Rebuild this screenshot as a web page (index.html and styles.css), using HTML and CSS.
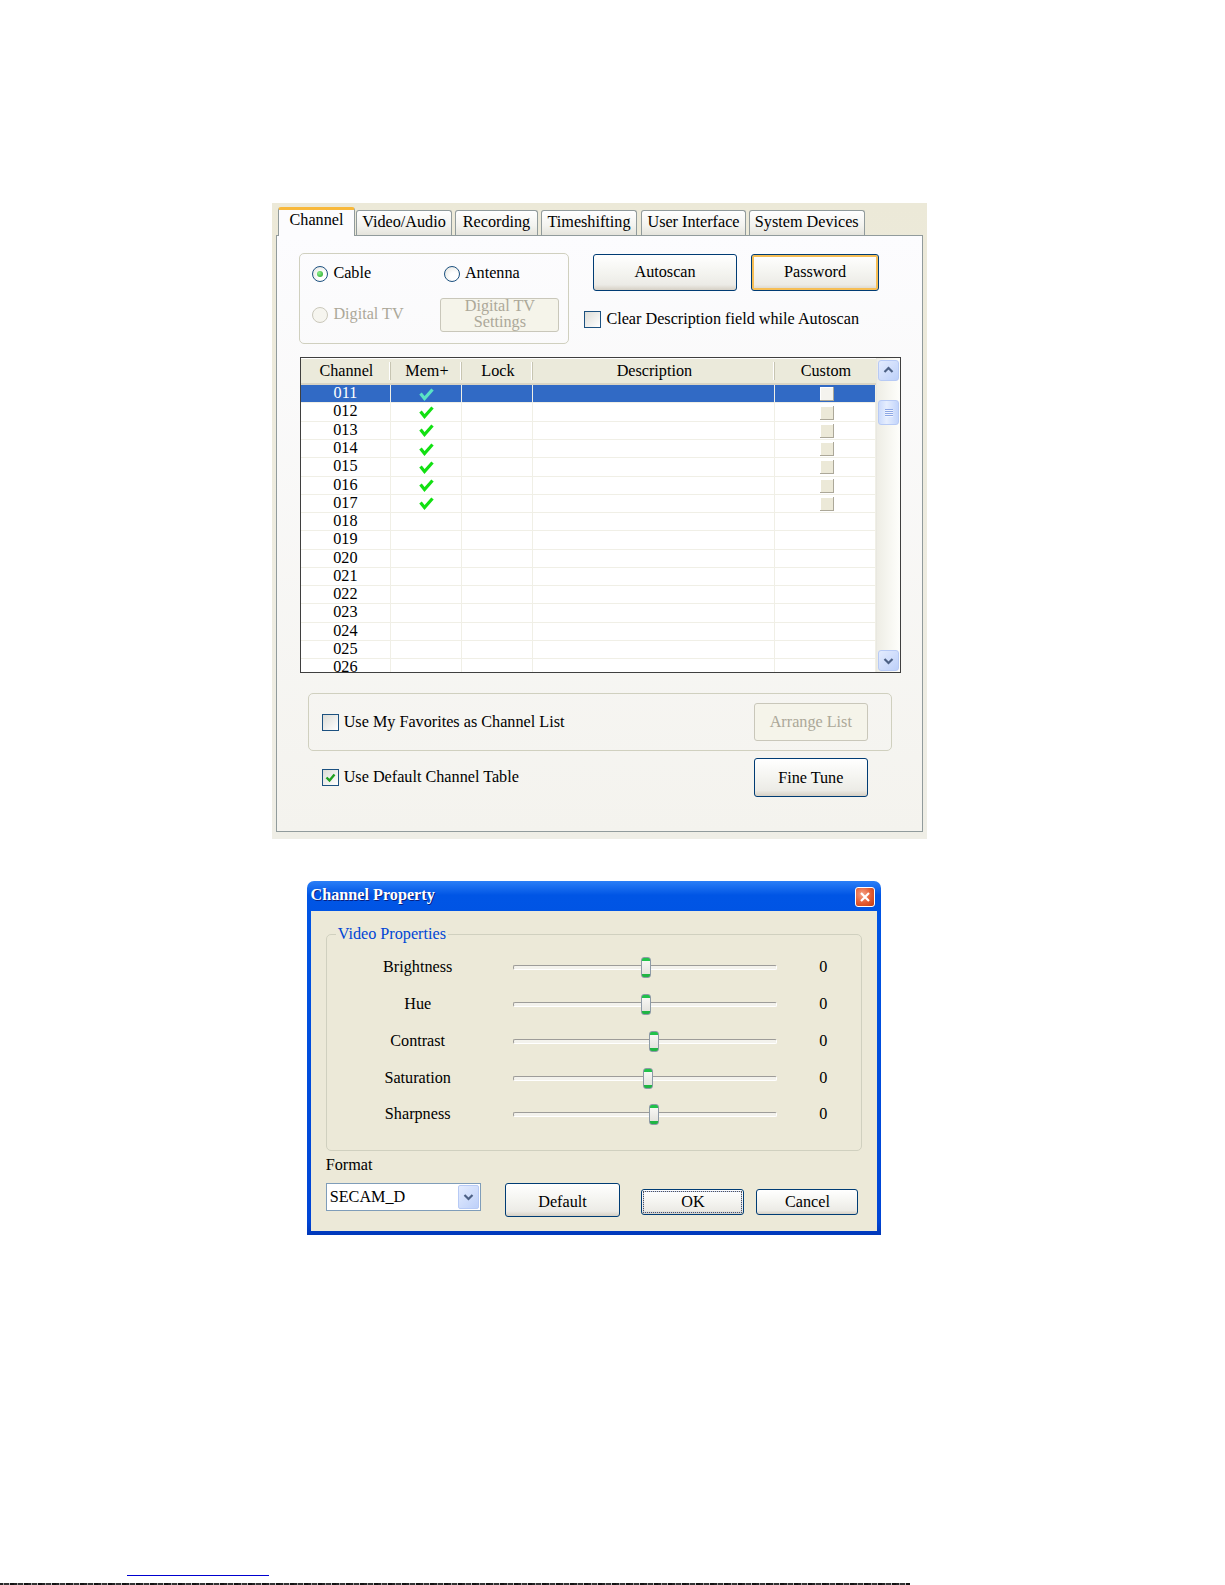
FILE: index.html
```html
<!DOCTYPE html>
<html lang="en">
<head>
    <meta charset="UTF-8">
    <meta name="viewport" content="width=device-width, initial-scale=1.0">
    <title>Channel Settings</title>
    <link rel="stylesheet" href="styles.css">
</head>
<body>

<div class="settings">
    <div class="tabs">
        <div class="tab active tab-channel">Channel</div>
        <div class="tab tab-video">Video/Audio</div>
        <div class="tab tab-rec">Recording</div>
        <div class="tab tab-time">Timeshifting</div>
        <div class="tab tab-ui">User Interface</div>
        <div class="tab tab-sys">System Devices</div>
    </div>

    <div class="panel">
        <div class="top-row">
            <div class="group source-group">
                <label class="radio"><span class="radio-dot checked"></span>Cable</label>
                <label class="radio antenna"><span class="radio-dot"></span>Antenna</label>
                <label class="radio disabled"><span class="radio-dot"></span>Digital TV</label>
                <button class="btn disabled dtv-btn">Digital TV<br>Settings</button>
            </div>
            <div class="scan-col">
                <div class="scan-buttons">
                    <button class="btn autoscan-btn">Autoscan</button>
                    <button class="btn default-btn password-btn">Password</button>
                </div>
                <label class="check"><span class="check-box"></span>Clear Description field while Autoscan</label>
            </div>
        </div>

        <div class="listview">
            <div class="lv-main">
                <div class="lv-head">
                    <span>Channel</span>
                    <span>Mem+</span>
                    <span>Lock</span>
                    <span>Description</span>
                    <span>Custom</span>
                </div>
                <div class="lv-body">
                    <div class="lv-row selected"><span>011</span><span><svg class="tick" width="15" height="13" viewBox="0 0 15 13"><path d="M1.5 5.5 L5.5 10.5 L13.5 1.5"/></svg></span><span></span><span></span><span><i class="flat-box"></i></span></div>
                    <div class="lv-row"><span>012</span><span><svg class="tick" width="15" height="13" viewBox="0 0 15 13"><path d="M1.5 5.5 L5.5 10.5 L13.5 1.5"/></svg></span><span></span><span></span><span><i class="flat-box"></i></span></div>
                    <div class="lv-row"><span>013</span><span><svg class="tick" width="15" height="13" viewBox="0 0 15 13"><path d="M1.5 5.5 L5.5 10.5 L13.5 1.5"/></svg></span><span></span><span></span><span><i class="flat-box"></i></span></div>
                    <div class="lv-row"><span>014</span><span><svg class="tick" width="15" height="13" viewBox="0 0 15 13"><path d="M1.5 5.5 L5.5 10.5 L13.5 1.5"/></svg></span><span></span><span></span><span><i class="flat-box"></i></span></div>
                    <div class="lv-row"><span>015</span><span><svg class="tick" width="15" height="13" viewBox="0 0 15 13"><path d="M1.5 5.5 L5.5 10.5 L13.5 1.5"/></svg></span><span></span><span></span><span><i class="flat-box"></i></span></div>
                    <div class="lv-row"><span>016</span><span><svg class="tick" width="15" height="13" viewBox="0 0 15 13"><path d="M1.5 5.5 L5.5 10.5 L13.5 1.5"/></svg></span><span></span><span></span><span><i class="flat-box"></i></span></div>
                    <div class="lv-row"><span>017</span><span><svg class="tick" width="15" height="13" viewBox="0 0 15 13"><path d="M1.5 5.5 L5.5 10.5 L13.5 1.5"/></svg></span><span></span><span></span><span><i class="flat-box"></i></span></div>
                    <div class="lv-row"><span>018</span><span></span><span></span><span></span><span></span></div>
                    <div class="lv-row"><span>019</span><span></span><span></span><span></span><span></span></div>
                    <div class="lv-row"><span>020</span><span></span><span></span><span></span><span></span></div>
                    <div class="lv-row"><span>021</span><span></span><span></span><span></span><span></span></div>
                    <div class="lv-row"><span>022</span><span></span><span></span><span></span><span></span></div>
                    <div class="lv-row"><span>023</span><span></span><span></span><span></span><span></span></div>
                    <div class="lv-row"><span>024</span><span></span><span></span><span></span><span></span></div>
                    <div class="lv-row"><span>025</span><span></span><span></span><span></span><span></span></div>
                    <div class="lv-row"><span>026</span><span></span><span></span><span></span><span></span></div>
                </div>
            </div>
            <div class="scrollbar">
                <div class="sb-btn"><svg width="11" height="8" viewBox="0 0 11 8"><path d="M1.5 6 L5.5 2 L9.5 6"/></svg></div>
                <div class="sb-thumb"><i></i><i></i><i></i><i></i></div>
                <div class="sb-btn sb-down"><svg width="11" height="8" viewBox="0 0 11 8"><path d="M1.5 2 L5.5 6 L9.5 2"/></svg></div>
            </div>
        </div>

        <div class="group fav-group">
            <label class="check"><span class="check-box"></span>Use My Favorites as Channel List</label>
            <button class="btn disabled side-btn">Arrange List</button>
        </div>

        <div class="default-row">
            <label class="check"><span class="check-box checked"><svg width="11" height="10" viewBox="0 0 11 10"><path d="M1.5 4.5 L4.5 7.5 L9.5 1.5"/></svg></span>Use Default Channel Table</label>
            <button class="btn side-btn fine-btn">Fine Tune</button>
        </div>
    </div>
</div>

<div class="dialog">
    <div class="titlebar">
        <span class="title">Channel Property</span>
        <span class="close-btn"><svg width="12" height="12" viewBox="0 0 12 12"><path d="M2 2 L10 10 M10 2 L2 10"/></svg></span>
    </div>
    <div class="dialog-body">
        <fieldset class="vp-group">
            <legend>Video Properties</legend>
            <div class="slider-row">
                <span class="slider-label">Brightness</span>
                <div class="track"><span class="thumb" style="left: 127px"></span></div>
                <span class="slider-value">0</span>
            </div>
            <div class="slider-row">
                <span class="slider-label">Hue</span>
                <div class="track"><span class="thumb" style="left: 127px"></span></div>
                <span class="slider-value">0</span>
            </div>
            <div class="slider-row">
                <span class="slider-label">Contrast</span>
                <div class="track"><span class="thumb" style="left: 135px"></span></div>
                <span class="slider-value">0</span>
            </div>
            <div class="slider-row">
                <span class="slider-label">Saturation</span>
                <div class="track"><span class="thumb" style="left: 129px"></span></div>
                <span class="slider-value">0</span>
            </div>
            <div class="slider-row">
                <span class="slider-label">Sharpness</span>
                <div class="track"><span class="thumb" style="left: 135px"></span></div>
                <span class="slider-value">0</span>
            </div>
        </fieldset>

        <div class="format-label">Format</div>
        <div class="dialog-actions">
            <div class="combo">
                <span class="combo-text">SECAM_D</span>
                <span class="combo-arrow"><svg width="11" height="8" viewBox="0 0 11 8"><path d="M1.5 2 L5.5 6 L9.5 2"/></svg></span>
            </div>
            <button class="btn reset-btn">Default</button>
            <button class="btn ok-btn"><span class="focus-ring">OK</span></button>
            <button class="btn cancel-btn">Cancel</button>
        </div>
    </div>
</div>

<div class="foot-link"></div>
<div class="foot-strip"></div>

</body>
</html>
```

FILE: styles.css
```css
body {
    margin: 0;
    height: 1585px;
    overflow: hidden;
    background: #fff;
    font-family: "Liberation Serif", "Times New Roman", serif;
    font-size: 16.2px;
    color: #000;
}

/* ---------- settings window ---------- */
.settings {
    width: 646.5px;
    margin: 203px 0 0 272px;
    padding: 4px 4px 7px;
    background: linear-gradient(#ECE9D8, #EFEEE6);
}
.tabs {
    display: flex;
    align-items: flex-end;
    height: 27.5px;
    padding-left: 2px;
}
.tab {
    box-sizing: border-box;
    height: 24.5px;
    margin-right: 3px;
    border: 1px solid #919B9C;
    border-bottom: none;
    border-radius: 3px 3px 0 0;
    background: linear-gradient(#FFFFFF, #F3F3EF 60%, #E5E4DC);
    text-align: center;
    line-height: 22px;
    white-space: nowrap;
}
.tab.active {
    position: relative;
    z-index: 1;
    height: 28.5px;
    margin-bottom: -1px;
    margin-right: 1px;
    border-top: 3px solid #F8B83A;
    background: #FCFCFE;
    line-height: 20px;
}
.tab-channel { width: 77px; }
.tab-video { width: 96px; }
.tab-rec { width: 83px; }
.tab-time { width: 96px; margin-right: 4px; }
.tab-ui { width: 105px; }
.tab-sys { width: 115.5px; }

.panel {
    height: 578px;
    padding: 17.3px 0 0 22.4px;
    border: 1px solid #919B9C;
    background: linear-gradient(#FCFCFE, #F4F3EE);
}
.top-row {
    display: flex;
}
.group {
    box-sizing: border-box;
    border: 1px solid #D0D0BF;
    border-radius: 5px;
}
.source-group {
    display: grid;
    grid-template-columns: 128px 120px;
    grid-template-rows: 16px 33.4px;
    row-gap: 16.4px;
    width: 270px;
    height: 91px;
    padding: 12px 0 0 12px;
}
.radio, .check {
    display: flex;
    align-items: center;
    white-space: nowrap;
}
.radio.antenna {
    margin-left: 3.5px;
}
.radio.disabled {
    color: #ACA899;
}
.radio-dot {
    box-sizing: border-box;
    width: 16px;
    height: 16px;
    margin-right: 5px;
    border: 1px solid #1C5180;
    border-radius: 50%;
    background: radial-gradient(circle at 65% 65%, #fff 30%, #E0E0DA);
    display: flex;
    align-items: center;
    justify-content: center;
}
.radio-dot.checked::after {
    content: "";
    width: 6px;
    height: 6px;
    border-radius: 50%;
    background: radial-gradient(circle at 35% 35%, #8DF08D, #21A121);
}
.radio.disabled .radio-dot {
    border-color: #CAC8BB;
    background: #F6F5EF;
}
.check-box {
    box-sizing: border-box;
    width: 17px;
    height: 17px;
    margin-right: 5px;
    border: 1px solid #1C5180;
    background: linear-gradient(135deg, #DCDCD7, #FFFFFF);
    display: flex;
    align-items: center;
    justify-content: center;
}
.check-box svg path {
    fill: none;
    stroke: #21A121;
    stroke-width: 2.4;
}

.btn {
    box-sizing: border-box;
    padding: 0;
    border: 1px solid #003C74;
    border-radius: 3px;
    background: linear-gradient(#FFFFFF, #F4F4F0 50%, #ECEBE6 85%, #D6D0C5);
    font-family: inherit;
    font-size: 16.2px;
    color: #000;
    line-height: 16px;
}
.btn.default-btn {
    box-shadow: inset 0 0 0 2px #F6BE55;
}
.btn.disabled {
    border-color: #C9C7BA;
    background: #F5F4EA;
    color: #ACA899;
}
.dtv-btn {
    width: 119px;
    height: 33.4px;
    line-height: 15.5px;
}
.scan-col {
    margin-left: 15px;
    padding-top: 1px;
}
.scan-buttons {
    display: flex;
    margin-left: 8.4px;
    gap: 14px;
}
.autoscan-btn {
    width: 144.5px;
    height: 37px;
}
.password-btn {
    width: 127.5px;
    height: 37px;
}
.scan-col .check {
    margin-top: 19px;
}

/* ---------- channel list ---------- */
.listview {
    display: flex;
    width: 599px;
    height: 314.7px;
    margin: 13px 0 0 1px;
    border: 1px solid #3F3F3F;
    background: #fff;
}
.lv-main {
    width: 575px;
}
.lv-head {
    display: grid;
    grid-template-columns: 90px 71px 71px 242px 101px;
    height: 24.4px;
    border-top: 1px solid #fff;
    border-bottom: 2px solid #D8D4C5;
    background: #EBEADB;
    text-align: center;
}
.lv-head span {
    box-shadow: inset -1px 0 #C7C5B2, inset -2px 0 #fff;
    margin: 3px 0;
    line-height: 18px;
}
.lv-head span:last-child {
    box-shadow: none;
}
.lv-body {
    height: 287.3px;
    overflow: hidden;
}
.lv-row {
    display: grid;
    grid-template-columns: 90px 71px 71px 242px 101px;
    height: 18.28px;
    box-shadow: inset 0 -1px #F0EFE6;
    line-height: 17px;
    text-align: center;
}
.lv-row span {
    box-shadow: inset -1px 0 #F0EFE6;
    display: flex;
    justify-content: center;
    align-items: center;
}
.lv-row span:first-child {
    display: block;
    padding-right: 2px;
}
.lv-row.selected {
    background: #316AC5;
    color: #fff;
    border-top: 1px dotted #B0802A;
    margin-top: -1px;
}
.tick path {
    fill: none;
    stroke: #12E012;
    stroke-width: 3.2;
}
.selected .tick path {
    stroke: #5AE3C4;
}
.flat-box {
    display: block;
    width: 14px;
    height: 14px;
    margin-left: 3px;
    background: #ECE9D8;
    box-shadow: inset -1px -1px #ACA899, inset 1px 1px #fff;
}
.selected .flat-box {
    background: #F4F3EE;
}
.scrollbar {
    display: flex;
    flex-direction: column;
    width: 23px;
    background: linear-gradient(90deg, #EEEDE5, #FEFEFB);
    border-left: 1px solid #E9E8E1;
}
.sb-btn {
    box-sizing: border-box;
    width: 21px;
    height: 21px;
    margin: 2px 1px 0;
    border: 1px solid #B7CAF5;
    border-radius: 3px;
    background: linear-gradient(135deg, #E4ECFE, #BDD0F9);
    display: flex;
    align-items: center;
    justify-content: center;
}
.sb-btn path {
    fill: none;
    stroke: #4D6185;
    stroke-width: 2.2;
}
.sb-down {
    margin: auto 1px 1px;
}
.sb-thumb {
    box-sizing: border-box;
    width: 21px;
    height: 25px;
    margin: 19px 1px 0;
    border: 1px solid #B7CAF5;
    border-radius: 3px;
    background: linear-gradient(90deg, #CCDBFC, #E6EEFE 40%, #C3D5FB);
    display: flex;
    flex-direction: column;
    align-items: center;
    justify-content: center;
    gap: 1px;
}
.sb-thumb i {
    width: 8px;
    height: 1px;
    background: #8DA7E4;
    box-shadow: 0 1px #F0F4FF;
}

.fav-group {
    display: flex;
    align-items: center;
    justify-content: space-between;
    width: 583.5px;
    height: 58.5px;
    margin: 19.3px 0 0 9.1px;
    padding: 0 23px 0 12.2px;
}
.side-btn {
    width: 114.4px;
    height: 38.5px;
}
.default-row {
    display: flex;
    align-items: center;
    justify-content: space-between;
    box-sizing: border-box;
    width: 583.5px;
    margin: 7px 0 0 9.1px;
    padding: 0 24px 0 13.2px;
}

/* ---------- channel property dialog ---------- */
.dialog {
    box-sizing: border-box;
    width: 574.5px;
    height: 354px;
    margin: 42.5px 0 0 306.5px;
    padding: 0 4px 4px;
    border-radius: 7px 7px 0 0;
    background: linear-gradient(#2B7FF7, #0055E5 4%, #0045D6 96%, #0037B8);
}
.titlebar {
    display: flex;
    align-items: center;
    justify-content: space-between;
    height: 29.3px;
    padding-right: 2.5px;
}
.title {
    color: #fff;
    font-weight: bold;
    text-shadow: 1px 1px #0A1E7C;
}
.close-btn {
    box-sizing: border-box;
    width: 20px;
    height: 20px;
    margin-top: 2px;
    border: 1px solid #fff;
    border-radius: 3px;
    background: radial-gradient(circle at 35% 35%, #F6A387, #E35A30 55%, #C23B10);
    display: flex;
    align-items: center;
    justify-content: center;
}
.close-btn path {
    stroke: #fff;
    stroke-width: 2.2;
}
.dialog-body {
    box-sizing: border-box;
    height: 320.7px;
    padding: 14.4px 15.2px 0;
    background: #ECE9D8;
}
.vp-group {
    margin: 0;
    padding: 5px 0 17px;
    border: 1px solid #D0D0BF;
    border-radius: 5px;
}
.vp-group legend {
    margin-left: 9px;
    padding: 0 2px;
    color: #0046D5;
}
.slider-row {
    display: flex;
    align-items: center;
    height: 36.9px;
}
.slider-label {
    width: 182px;
    text-align: center;
}
.track {
    position: relative;
    box-sizing: border-box;
    width: 264px;
    height: 5px;
    margin-left: 4px;
    border: 1px solid #9D9C99;
    border-right-color: #fff;
    border-bottom-color: #fff;
    border-radius: 2px;
    background: #F3F2EC;
}
.thumb {
    position: absolute;
    top: -9px;
    box-sizing: border-box;
    width: 10px;
    height: 21px;
    border: 1px solid #8D9AA6;
    border-radius: 3px;
    background: linear-gradient(#21C24B 0 3px, #F7F7F4 3px, #E4E4DE calc(100% - 3px), #1FB544 calc(100% - 3px));
}
.slider-value {
    width: 30px;
    margin-left: 31.6px;
    text-align: center;
}
.format-label {
    margin-top: 5px;
    line-height: 18px;
}
.dialog-actions {
    display: flex;
    align-items: flex-start;
    margin-top: 8.5px;
}
.combo {
    box-sizing: border-box;
    display: flex;
    align-items: center;
    justify-content: space-between;
    width: 155px;
    height: 28.5px;
    border: 1px solid #7F9DB9;
    background: #fff;
}
.combo-text {
    padding-left: 3px;
}
.combo-arrow {
    box-sizing: border-box;
    width: 21px;
    height: 24px;
    margin-right: 1px;
    border: 1px solid #B7CAF5;
    border-radius: 2px;
    background: linear-gradient(135deg, #E4ECFE, #BDD0F9);
    display: flex;
    align-items: center;
    justify-content: center;
}
.combo-arrow path {
    fill: none;
    stroke: #4D6185;
    stroke-width: 2.2;
}
.reset-btn {
    width: 115.3px;
    height: 34.4px;
    margin-left: 24.2px;
    padding-top: 3px;
}
.ok-btn {
    width: 103px;
    height: 26.5px;
    margin: 6px 0 0 21.3px;
    padding: 2px;
}
.focus-ring {
    display: block;
    height: 20px;
    line-height: 20px;
    outline: 1px dotted #555;
    box-shadow: 0 0 0 1px #B8C8F0;
}
.cancel-btn {
    width: 102px;
    height: 26.5px;
    margin: 6px 0 0 12px;
}

/* ---------- page footer ---------- */
.foot-link {
    width: 142px;
    height: 1px;
    margin: 340px 0 0 127px;
    background: #0000D0;
}
.foot-strip {
    width: 910px;
    height: 2px;
    margin-top: 7px;
    background: repeating-linear-gradient(90deg, #222 0 3px, #999 3px 4px, #333 4px 9px, #bbb 9px 10px, #111 10px 14px);
}
```
